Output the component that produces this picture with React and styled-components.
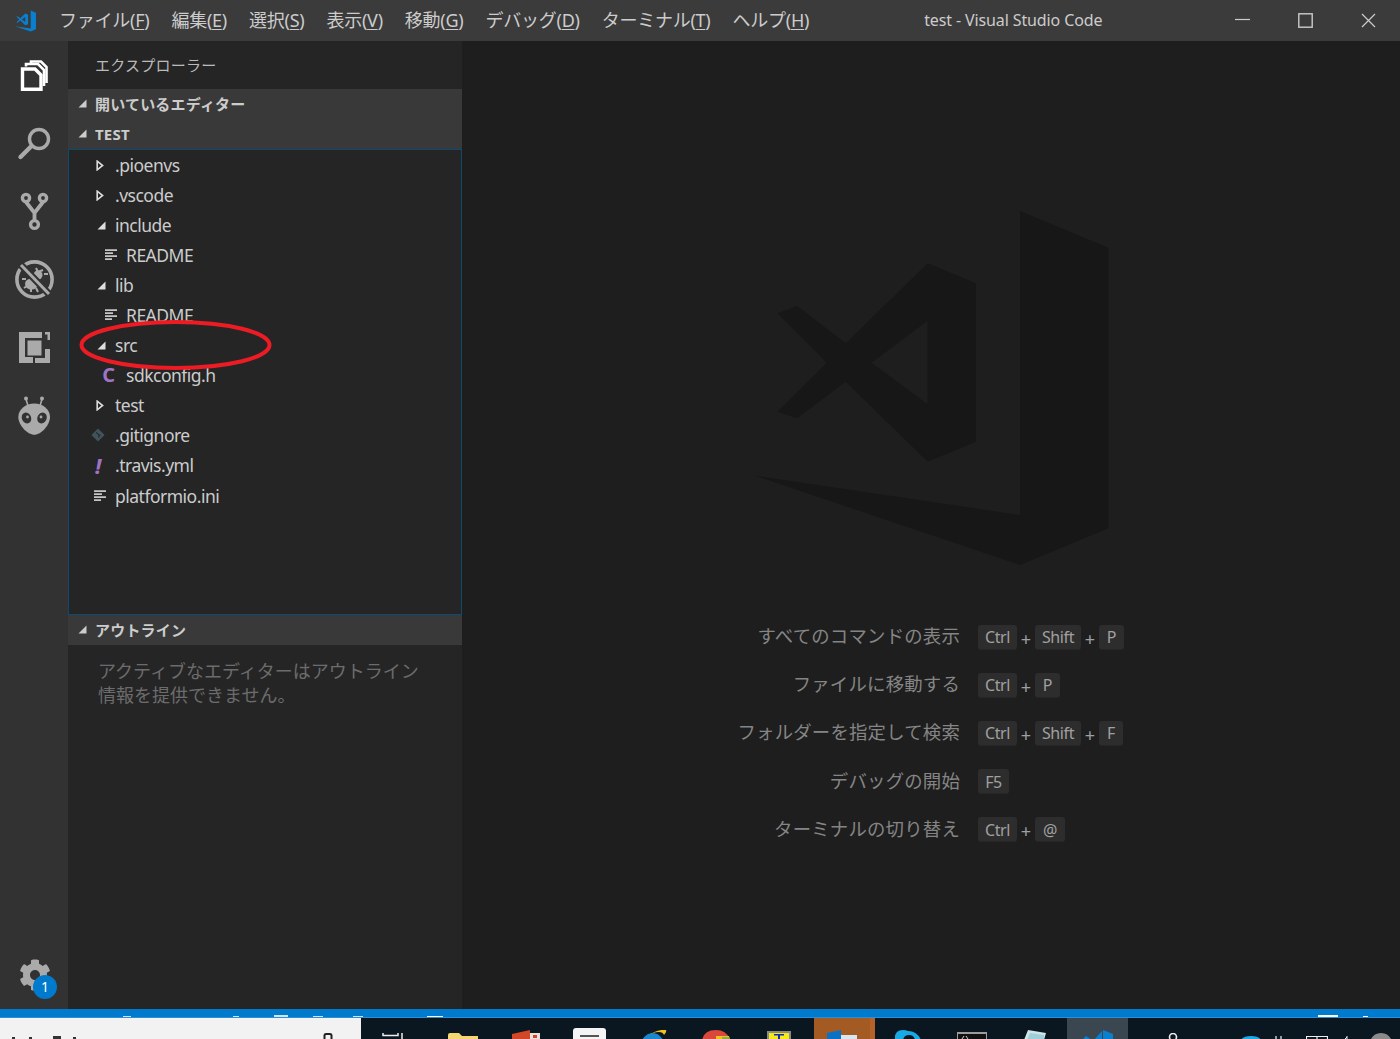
import React from 'react'
import styled, { createGlobalStyle } from 'styled-components'
import { FaCog } from 'react-icons/fa'

const GlobalStyle = createGlobalStyle`
  html, body { margin: 0; padding: 0; background: #1e1e1e; }
  * { box-sizing: border-box; }
`

const Page = styled.div`
  width: 1400px;
  height: 1039px;
  display: flex;
  flex-direction: column;
  overflow: hidden;
  position: relative;
  font-family: "Noto Sans", "Noto Sans CJK JP", sans-serif;
  color: #ccc;
`

/* title bar */
const TitleBar = styled.header`
  height: 41px;
  flex: none;
  display: flex;
  align-items: center;
  background: #3b3b3b;
  padding-left: 15px;
`
const Menu = styled.nav`
  display: flex;
  gap: 22px;
  margin-left: 23px;
  padding-bottom: 3px;
  font-size: 18px;
  letter-spacing: -0.25px;
  white-space: nowrap;
`
const MenuItem = styled.span`
  u { text-underline-offset: 2px; }
`
const WindowTitle = styled.div`
  margin-left: 115px;
  padding-bottom: 2px;
  font-size: 16px;
  letter-spacing: -0.12px;
  white-space: nowrap;
`
const WindowButtons = styled.div`
  margin-left: auto;
  display: flex;
`
const WindowButton = styled.div`
  width: 63px;
  height: 41px;
  display: flex;
  align-items: center;
  justify-content: center;
  svg { display: block; }
`

/* body */
const Main = styled.div`
  flex: 1;
  display: flex;
  min-height: 0;
`
const ActivityBar = styled.aside`
  width: 68px;
  flex: none;
  display: flex;
  flex-direction: column;
  background: #323232;
`
const ActivityItem = styled.div`
  height: 68px;
  flex: none;
  display: flex;
  align-items: center;
  justify-content: center;
  padding-left: 2px;
  color: ${p => (p.$active ? '#fff' : '#aaa')};
`
const Gear = styled.div`
  margin-top: auto;
  height: 68px;
  position: relative;
  display: flex;
  justify-content: center;
  padding-top: 18px;
  padding-left: 2px;
  color: #aaa;
`
const Badge = styled.span`
  position: absolute;
  left: 33px;
  top: 34px;
  width: 24px;
  height: 24px;
  border-radius: 50%;
  background: #007acc;
  color: #fff;
  font-size: 14px;
  line-height: 24px;
  text-align: center;
`

const SideBar = styled.section`
  width: 394px;
  flex: none;
  display: flex;
  flex-direction: column;
  background: #252526;
`
const SideTitle = styled.div`
  height: 48px;
  padding: 0 0 2px 27px;
  display: flex;
  align-items: center;
  font-size: 15px;
  letter-spacing: 0.25px;
  color: #bbb;
`
const SectionHead = styled.div`
  height: 30px;
  flex: none;
  display: flex;
  align-items: center;
  padding: 0 0 1px 10px;
  gap: 8px;
  background: #393939;
  font-size: 15px;
  font-weight: 700;
  letter-spacing: 0.2px;
  color: #ccc;
`
const Tree = styled.div`
  height: 466px;
  flex: none;
  border: 1px solid #0d4a73;
`
const Row = styled.div`
  height: 30.06px;
  display: flex;
  align-items: center;
  padding-left: ${p => (p.$child ? 33 : 22)}px;
  font-size: 17.5px;
  letter-spacing: -0.5px;
  color: #ccc;
`
const Slot = styled.span`
  width: 24px;
  flex: none;
  display: flex;
  justify-content: center;
  padding-right: ${p => p.$pad}px;
  svg { display: block; }
`
const CIcon = styled.span`
  color: #a074c4;
  font-weight: 700;
  font-size: 20px;
  line-height: 1;
`
const BangIcon = styled.span`
  color: #a074c4;
  font-weight: 700;
  font-style: italic;
  font-size: 22px;
  line-height: 1;
`
const OutlineNote = styled.p`
  margin: 14px 0 0;
  padding-left: 30px;
  width: 360px;
  font-size: 18px;
  line-height: 24px;
  color: #6c6c6c;
`
const Ellipse = styled.svg`
  position: absolute;
  left: 78px;
  top: 319px;
  pointer-events: none;
`

/* editor */
const Editor = styled.main`
  flex: 1;
  display: flex;
  flex-direction: column;
  background: #1e1e1e;
  padding-top: 159px;
`
const Watermark = styled.svg`
  display: block;
  flex: none;
  margin-left: 278px;
`
const Shortcuts = styled.div`
  margin-top: 43px;
`
const ShortcutRow = styled.div`
  height: 48.2px;
  display: grid;
  grid-template-columns: 498px auto;
  column-gap: 18px;
  align-items: center;
  justify-content: start;
`
const ShortcutLabel = styled.span`
  padding-bottom: 4px;
  text-align: right;
  font-size: 18.4px;
  letter-spacing: 0.2px;
  color: #858585;
  white-space: nowrap;
`
const Keys = styled.span`
  display: flex;
  align-items: center;
`
const Key = styled.kbd`
  height: 25px;
  width: ${p => p.$w}px;
  display: flex;
  align-items: center;
  justify-content: center;
  background: #2d2d2d;
  border-radius: 3px;
  box-shadow: inset 0 -1px 0 #262626;
  font-family: inherit;
  font-size: 16px;
  letter-spacing: -0.4px;
  color: #a0a0a0;
`
const Plus = styled.span`
  width: 18px;
  text-align: center;
  font-size: 18px;
  line-height: 22px;
  padding-top: 3px;
  color: #a0a0a0;
`

/* status + taskbar */
const StatusBar = styled.footer`
  height: 8px;
  flex: none;
  display: flex;
  align-items: flex-end;
  background: #007acc;
`
const Sliver = styled.i`
  display: block;
  flex: none;
  height: ${p => p.$h || 1}px;
  width: ${p => p.$w}px;
  margin-left: ${p => p.$gap}px;
  background: ${p => p.$color || '#cfe6f6'};
`
const TaskBar = styled.div`
  height: 22px;
  flex: none;
  display: flex;
  overflow: hidden;
  background: #0b1720;
  border-top: 1px solid #2a8fd8;
`
const SearchBox = styled.div`
  width: 361px;
  flex: none;
  display: flex;
  align-items: flex-end;
  background: #f2f2f2;
`
const MicMark = styled.svg`
  display: block;
  flex: none;
  margin-left: 247px;
`
const TaskSlot = styled.div`
  width: ${p => p.$w || 63.25}px;
  margin-left: ${p => p.$before || 0}px;
  margin-right: ${p => p.$after || 0}px;
  flex: none;
  display: flex;
  justify-content: center;
  background: ${p => p.$bg || 'transparent'};
  border-right: ${p => (p.$strip ? `5px solid ${p.$strip}` : 'none')};
  svg { display: block; flex: none; margin-top: ${p => p.$top || 0}px; }
`
const Tray = styled.div`
  margin-left: 40px;
  display: flex;
`
const TrayMark = styled.svg`
  display: block;
  flex: none;
  margin-left: ${p => p.$left || 0}px;
  margin-top: ${p => p.$top}px;
`

const VsMark = ({ as: Comp = 'svg', fill, ...rest }) => (
  <Comp {...rest}>
    <path
      fill={fill}
      fillRule="evenodd"
      d="M563 190L708 250V725L563 785L317 545L172 655L112 635L260 488L112 340L172 318L317 430ZM563 362L395 488L563 613Z"
    />
    <path fill={fill} d="M840 33L1105 143V985L840 1095L45 827L840 945Z" />
  </Comp>
)

const Icon = ({ children, stroke = 'currentColor', width = 3.4 }) => (
  <svg width="48" height="48" viewBox="0 0 48 48" fill="none" stroke={stroke} strokeWidth={width}>
    {children}
  </svg>
)

const FilesIcon = () => (
  <Icon>
    <path d="M11.5 18H24L30 24V38.2H11.5Z" />
    <path d="M15 15.5V13H27L33 19V35" strokeWidth="2.6" />
    <path d="M20 12.5V10.5H30L35.5 16V32" strokeWidth="2.6" />
  </Icon>
)
const SearchIcon = () => (
  <Icon>
    <circle cx="28" cy="20" r="9.5" />
    <path d="M20 27.5L9.5 38" strokeWidth="4.4" strokeLinecap="round" />
  </Icon>
)
const GitIcon = () => (
  <Icon>
    <circle cx="15" cy="11" r="3.6" />
    <circle cx="32" cy="11" r="3.6" />
    <circle cx="23.5" cy="37.5" r="3.9" />
    <path d="M15 15L23.5 26L32 15M23.5 26V33.5" strokeWidth="3.8" />
  </Icon>
)
const DebugIcon = () => (
  <Icon>
    <circle cx="23.5" cy="24.5" r="17.6" strokeWidth="3.6" />
    <ellipse cx="20.5" cy="29" rx="6.5" ry="5.5" fill="currentColor" stroke="none" />
    <path d="M25 13L27 17L32 15M33 19L37 19" strokeWidth="2" />
    <path d="M11 24H15M13 33L16 31M20 37V34M27 37L25 33" strokeWidth="2" />
    <circle cx="27" cy="20" r="4.5" fill="currentColor" stroke="none" />
    <path d="M10 10L38 39" stroke="#323232" strokeWidth="7" />
    <path d="M10 10L38 39" strokeWidth="3" />
  </Icon>
)
const ExtensionsIcon = () => (
  <svg width="48" height="48" viewBox="0 0 48 48" fill="currentColor">
    <path d="M8 9H31V15H14V34H22V40H8Z" />
    <path d="M16.5 17.5H30.5V32.5H16.5Z" />
    <path d="M34 9H39V17H36.5V11.5H34Z" />
    <path d="M34 26H39V40H24V35H34Z" />
  </svg>
)
const AlienIcon = () => (
  <svg width="48" height="48" viewBox="0 0 48 48" fill="currentColor">
    <circle cx="15" cy="7.5" r="2" />
    <circle cx="31" cy="7.5" r="2" />
    <path d="M15 8L17 15M31 8L29 15" stroke="currentColor" strokeWidth="1.6" />
    <path d="M23.3 12.5C32 12.5 39 18.5 39 26C39 34 30 43.8 23.3 43.8C16.5 43.8 7.3 34 7.3 26C7.3 18.5 14.5 12.5 23.3 12.5Z" />
    <ellipse cx="15.5" cy="27" rx="4.6" ry="5.6" fill="#323232" transform="rotate(-25 15.5 27)" />
    <ellipse cx="31" cy="27" rx="4.6" ry="5.6" fill="#323232" transform="rotate(25 31 27)" />
    <circle cx="16.5" cy="26" r="1.4" />
    <circle cx="30" cy="26" r="1.4" />
  </svg>
)

const TwistyOpen = ({ color = '#ddd' }) => (
  <svg width="9" height="9" viewBox="0 0 9 9"><path d="M8.5 .5V8.5H.5Z" fill={color} /></svg>
)
const TwistyClosed = () => (
  <svg width="8" height="11" viewBox="0 0 8 11"><path d="M1.2 1.2L6.6 5.5L1.2 9.8Z" fill="none" stroke="#ddd" strokeWidth="1.6" /></svg>
)
const LinesIcon = () => (
  <svg width="13" height="12" viewBox="0 0 13 12" fill="none" stroke="#c5c5c5" strokeWidth="1.8">
    <path d="M0 1.2H12M0 4.2H8M0 7.2H12M0 10.2H7" />
  </svg>
)
const GitFileIcon = () => (
  <svg width="16" height="16" viewBox="0 0 16 16">
    <path d="M8 .5L15.5 8L8 15.5L.5 8Z" fill="#41535b" />
    <path d="M6 5L9 8V11M9 8H11" stroke="#252526" strokeWidth="1.2" fill="none" />
  </svg>
)

const files = [
  { name: '.pioenvs', twisty: 'closed' },
  { name: '.vscode', twisty: 'closed' },
  { name: 'include', twisty: 'open' },
  { name: 'README', child: true, icon: 'lines' },
  { name: 'lib', twisty: 'open' },
  { name: 'README', child: true, icon: 'lines' },
  { name: 'src', twisty: 'open' },
  { name: 'sdkconfig.h', child: true, icon: 'c' },
  { name: 'test', twisty: 'closed' },
  { name: '.gitignore', icon: 'git' },
  { name: '.travis.yml', icon: 'bang' },
  { name: 'platformio.ini', icon: 'lines' },
]

const rowIcon = f => {
  if (f.twisty === 'open') return <Slot $pad={4}><TwistyOpen /></Slot>
  if (f.twisty === 'closed') return <Slot $pad={6}><TwistyClosed /></Slot>
  if (f.icon === 'lines') return <Slot $pad={6}><LinesIcon /></Slot>
  if (f.icon === 'c') return <Slot $pad={11}><CIcon>C</CIcon></Slot>
  if (f.icon === 'git') return <Slot $pad={10}><GitFileIcon /></Slot>
  return <Slot $pad={10}><BangIcon>!</BangIcon></Slot>
}

const menus = [
  ['ファイル', 'F'],
  ['編集', 'E'],
  ['選択', 'S'],
  ['表示', 'V'],
  ['移動', 'G'],
  ['デバッグ', 'D'],
  ['ターミナル', 'T'],
  ['ヘルプ', 'H'],
]

const shortcuts = [
  { label: 'すべてのコマンドの表示', keys: [['Ctrl', 39], ['Shift', 46], ['P', 25]] },
  { label: 'ファイルに移動する', keys: [['Ctrl', 39], ['P', 25]] },
  { label: 'フォルダーを指定して検索', keys: [['Ctrl', 39], ['Shift', 46], ['F', 24]] },
  { label: 'デバッグの開始', keys: [['F5', 31]] },
  { label: 'ターミナルの切り替え', keys: [['Ctrl', 39], ['@', 30]] },
]

const App = () => (
  <Page>
    <GlobalStyle />
    <TitleBar>
      <VsMark width="21" height="22" viewBox="45 33 1062 1062" fill="#0a7fd0" />
      <Menu>
        {menus.map(([name, key]) => (
          <MenuItem key={key}>{name}(<u>{key}</u>)</MenuItem>
        ))}
      </Menu>
      <WindowTitle>test - Visual Studio Code</WindowTitle>
      <WindowButtons>
        <WindowButton>
          <svg width="15" height="15" viewBox="0 0 15 15"><path d="M0 6.5H15" stroke="#ccc" strokeWidth="1.2" /></svg>
        </WindowButton>
        <WindowButton>
          <svg width="15" height="15" viewBox="0 0 15 15"><rect x=".8" y=".8" width="13.4" height="13.4" fill="none" stroke="#ccc" strokeWidth="1.4" /></svg>
        </WindowButton>
        <WindowButton>
          <svg width="15" height="15" viewBox="0 0 15 15"><path d="M1 1L14 14M14 1L1 14" stroke="#ccc" strokeWidth="1.2" /></svg>
        </WindowButton>
      </WindowButtons>
    </TitleBar>

    <Main>
      <ActivityBar>
        <ActivityItem $active><FilesIcon /></ActivityItem>
        <ActivityItem><SearchIcon /></ActivityItem>
        <ActivityItem><GitIcon /></ActivityItem>
        <ActivityItem><DebugIcon /></ActivityItem>
        <ActivityItem><ExtensionsIcon /></ActivityItem>
        <ActivityItem><AlienIcon /></ActivityItem>
        <Gear>
          <FaCog size={32} />
          <Badge>1</Badge>
        </Gear>
      </ActivityBar>

      <SideBar>
        <SideTitle>エクスプローラー</SideTitle>
        <SectionHead><TwistyOpen color="#ccc" />開いているエディター</SectionHead>
        <SectionHead><TwistyOpen color="#ccc" />TEST</SectionHead>
        <Tree>
          {files.map((f, i) => (
            <Row key={i} $child={f.child}>
              {rowIcon(f)}
              {f.name}
            </Row>
          ))}
        </Tree>
        <SectionHead><TwistyOpen color="#ccc" />アウトライン</SectionHead>
        <OutlineNote>アクティブなエディターはアウトライン情報を提供できません。</OutlineNote>
      </SideBar>

      <Editor>
        <VsMark as={Watermark} width="380" height="370" viewBox="0 0 1140 1110" fill="#171717" />
        <Shortcuts>
          {shortcuts.map(s => (
            <ShortcutRow key={s.label}>
              <ShortcutLabel>{s.label}</ShortcutLabel>
              <Keys>
                {s.keys.map(([k, w], i) => (
                  <React.Fragment key={k}>
                    {i > 0 && <Plus>+</Plus>}
                    <Key $w={w}>{k}</Key>
                  </React.Fragment>
                ))}
              </Keys>
            </ShortcutRow>
          ))}
        </Shortcuts>
      </Editor>
    </Main>

    <StatusBar>
      <Sliver $gap={123} $w={8} />
      <Sliver $gap={102} $w={6} />
      <Sliver $gap={35} $w={14} $h={2} />
      <Sliver $gap={25} $w={10} />
      <Sliver $gap={30} $w={10} />
      <Sliver $gap={64} $w={16} $color="#fff" />
      <Sliver $gap={875} $w={20} $h={2} $color="#fff" />
      <Sliver $gap={25} $w={5} $color="#fff" />
    </StatusBar>

    <TaskBar>
      <SearchBox>
        <Sliver $gap={12} $w={3} $h={2} $color="#333" />
        <Sliver $gap={14} $w={3} $h={2} $color="#333" />
        <Sliver $gap={21} $w={8} $h={3} $color="#333" />
        <Sliver $gap={12} $w={3} $h={2} $color="#333" />
        <MicMark width="10" height="6" viewBox="0 0 10 6">
          <path d="M1.5 6V2.5Q1.5 1 3 1H7Q8.5 1 8.5 2.5V6" fill="none" stroke="#222" strokeWidth="2" />
        </MicMark>
      </SearchBox>
      <TaskSlot $w={64} $after={6.5} $top={15}>
        <svg width="22" height="6" viewBox="0 0 22 6" fill="none" stroke="#eee" strokeWidth="1.5">
          <path d="M1 0V2.5H16V0M20 0V6" />
        </svg>
      </TaskSlot>
      <TaskSlot $top={15}>
        <svg width="30" height="10" viewBox="0 0 30 10"><path d="M0 10V2Q0 0 2 0H11L14 3H30V10Z" fill="#f3d770" /></svg>
      </TaskSlot>
      <TaskSlot $top={12}>
        <svg width="28" height="12" viewBox="0 0 28 12">
          <path d="M0 4L18 0V12H0Z" fill="#d24726" />
          <path d="M18 3H28V12H18Z" fill="#e8e0da" />
          <path d="M21 5H25V8H21Z" fill="#d24726" />
        </svg>
      </TaskSlot>
      <TaskSlot $top={10}>
        <svg width="33" height="12" viewBox="0 0 33 12">
          <path d="M0 12V3Q0 0 3 0H30Q33 0 33 3V12Z" fill="#f4f4f4" />
          <path d="M7 7H26V9H7Z" fill="#555" />
        </svg>
      </TaskSlot>
      <TaskSlot $top={12}>
        <svg width="28" height="10" viewBox="0 0 28 10">
          <path d="M3 10Q7 3 14 3Q20 3 24 10Z" fill="#1a86d0" />
          <path d="M8 6Q18 -1 27 0Q28 2 25 5Q24 2 20 2Q14 2 8 6Z" fill="#f2c21c" />
        </svg>
      </TaskSlot>
      <TaskSlot $top={12}>
        <svg width="28" height="10" viewBox="0 0 28 10">
          <path d="M0 10Q2 0 14 0Q24 0 28 9Z" fill="#d9483b" />
          <path d="M14 6H27L28 10H14Z" fill="#f2c21c" />
          <path d="M20 7H27L28 10H20Z" fill="#8cae4a" />
        </svg>
      </TaskSlot>
      <TaskSlot $top={13}>
        <svg width="24" height="9" viewBox="0 0 24 9">
          <path d="M0 0H24V9H0Z" fill="#8a8a8a" />
          <path d="M2 2H22V9H2Z" fill="#f4ea18" />
          <path d="M7 3H17V4.5H13V9H11V4.5H7Z" fill="#1a2ba8" />
        </svg>
      </TaskSlot>
      <TaskSlot $w={61} $before={3} $after={2.25} $bg="#a35a23" $strip="#b5622a" $top={12}>
        <svg width="30" height="10" viewBox="0 0 30 10">
          <path d="M0 3L14 0V10H0Z" fill="#0a72c4" />
          <path d="M14 5H30V10H14Z" fill="#d7e7f2" />
        </svg>
      </TaskSlot>
      <TaskSlot $top={12}>
        <svg width="30" height="10" viewBox="0 0 30 10">
          <path d="M1 10Q0 0 9 0Q12 0 14 1Q23 1 27 10Z" fill="#19a9e5" />
          <path d="M9 10Q10 5 15 5Q20 5 21 10Z" fill="#0b1720" />
        </svg>
      </TaskSlot>
      <TaskSlot $top={14}>
        <svg width="30" height="8" viewBox="0 0 30 8">
          <path d="M0 0H30V8H0Z" fill="#9c9c9c" />
          <path d="M1 2H29V8H1Z" fill="#111" />
          <path d="M5 7L7 4M9 4L11 7" stroke="#ccc" strokeWidth="1" />
        </svg>
      </TaskSlot>
      <TaskSlot $top={12}>
        <svg width="22" height="10" viewBox="0 0 22 10">
          <path d="M0 10L4 0L22 3L20 10Z" fill="#cfe5e6" />
          <path d="M3 10L6 3L20 5V10Z" fill="#9fd0da" />
        </svg>
      </TaskSlot>
      <TaskSlot $w={61} $bg="#3a4750" $top={9}>
        <svg width="32" height="13" viewBox="0 0 32 13">
          <path d="M0 13L4 9L10 13ZM12 13L20 4V13Z M21 3L31 7V13H21Z" fill="#0a7fd0" />
        </svg>
      </TaskSlot>
      <Tray>
        <TrayMark $top={15} width="10" height="6" viewBox="0 0 10 6"><circle cx="5" cy="4" r="3.5" fill="none" stroke="#eee" strokeWidth="1.6" /></TrayMark>
        <TrayMark $left={63} $top={18} width="20" height="4" viewBox="0 0 20 4"><path d="M0 4Q2 0 10 0Q18 0 20 4Z" fill="#19a9e5" /></TrayMark>
        <TrayMark $left={14} $top={18} width="8" height="4" viewBox="0 0 8 4"><path d="M1 0V4M6 0V4" stroke="#eee" strokeWidth="1.2" /></TrayMark>
        <TrayMark $left={23} $top={18} width="22" height="4" viewBox="0 0 22 4"><path d="M.5 4V.5H21.5V4M11 .5V4" fill="none" stroke="#eee" strokeWidth="1.2" /></TrayMark>
        <TrayMark $left={15} $top={18} width="5" height="4" viewBox="0 0 5 4"><path d="M4 0V4M1 4L4 1" stroke="#eee" strokeWidth="1" /></TrayMark>
        <TrayMark $left={23} $top={15} width="20" height="6" viewBox="0 0 20 6"><path d="M0 6Q3 0 10 0Q17 0 20 6Z" fill="#8a8a8a" /></TrayMark>
      </Tray>
    </TaskBar>

    <Ellipse width="196" height="52" viewBox="0 0 196 52">
      <ellipse cx="97.5" cy="26" rx="94" ry="23" fill="none" stroke="#ed1c24" strokeWidth="4" />
    </Ellipse>
  </Page>
)

export default App
